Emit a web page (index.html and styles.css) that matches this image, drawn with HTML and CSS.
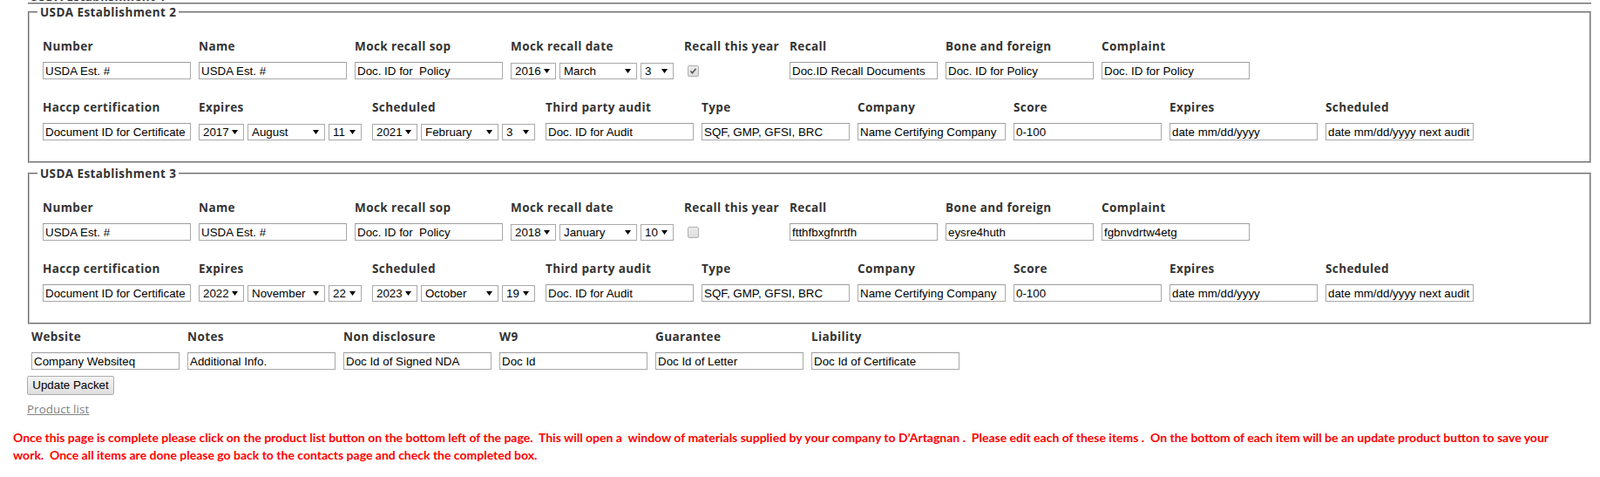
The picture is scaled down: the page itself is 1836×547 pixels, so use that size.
FILE: index.html
```html
<!DOCTYPE html>
<html>
<head>
<meta charset="utf-8">
<link rel="stylesheet" href="styles.css">
</head>
<body>
<div class="clip"><div class="clip-text">USDA Establishment 1</div></div>

<fieldset class="est">
  <legend>USDA Establishment 2</legend>
  <div class="row">
    <div class="cell"><label>Number</label><input type="text" value="USDA Est. #"></div>
    <div class="cell"><label>Name</label><input type="text" value="USDA Est. #"></div>
    <div class="cell"><label>Mock recall sop</label><input type="text" value="Doc. ID for  Policy"></div>
    <div class="cell date"><label>Mock recall date</label>
      <div class="sels"><select class="yr"><option>2016</option></select><select class="mo"><option>March</option></select><select class="dy"><option>3</option></select></div>
    </div>
    <div class="cell chk"><label>Recall this year</label><div class="ctl"><input type="checkbox" checked></div></div>
    <div class="cell"><label>Recall</label><input type="text" value="Doc.ID Recall Documents"></div>
    <div class="cell"><label>Bone and foreign</label><input type="text" value="Doc. ID for Policy"></div>
    <div class="cell"><label>Complaint</label><input type="text" value="Doc. ID for Policy"></div>
  </div>
  <div class="row">
    <div class="cell"><label>Haccp certification</label><input type="text" value="Document ID for Certificate"></div>
    <div class="cell date"><label>Expires</label>
      <div class="sels"><select class="yr"><option>2017</option></select><select class="mo"><option>August</option></select><select class="dy"><option>11</option></select></div>
    </div>
    <div class="cell date"><label>Scheduled</label>
      <div class="sels"><select class="yr"><option>2021</option></select><select class="mo"><option>February</option></select><select class="dy"><option>3</option></select></div>
    </div>
    <div class="cell"><label>Third party audit</label><input type="text" value="Doc. ID for Audit"></div>
    <div class="cell"><label>Type</label><input type="text" value="SQF, GMP, GFSI, BRC"></div>
    <div class="cell"><label>Company</label><input type="text" value="Name Certifying Company"></div>
    <div class="cell"><label>Score</label><input type="text" value="0-100"></div>
    <div class="cell"><label>Expires</label><input type="text" value="date mm/dd/yyyy"></div>
    <div class="cell"><label>Scheduled</label><input type="text" value="date mm/dd/yyyy next audit"></div>
  </div>
</fieldset>

<fieldset class="est">
  <legend>USDA Establishment 3</legend>
  <div class="row">
    <div class="cell"><label>Number</label><input type="text" value="USDA Est. #"></div>
    <div class="cell"><label>Name</label><input type="text" value="USDA Est. #"></div>
    <div class="cell"><label>Mock recall sop</label><input type="text" value="Doc. ID for  Policy"></div>
    <div class="cell date"><label>Mock recall date</label>
      <div class="sels"><select class="yr"><option>2018</option></select><select class="mo"><option>January</option></select><select class="dy"><option>10</option></select></div>
    </div>
    <div class="cell chk"><label>Recall this year</label><div class="ctl"><input type="checkbox"></div></div>
    <div class="cell"><label>Recall</label><input type="text" value="ftthfbxgfnrtfh"></div>
    <div class="cell"><label>Bone and foreign</label><input type="text" value="eysre4huth"></div>
    <div class="cell"><label>Complaint</label><input type="text" value="fgbnvdrtw4etg"></div>
  </div>
  <div class="row">
    <div class="cell"><label>Haccp certification</label><input type="text" value="Document ID for Certificate"></div>
    <div class="cell date"><label>Expires</label>
      <div class="sels"><select class="yr"><option>2022</option></select><select class="mo"><option>November</option></select><select class="dy"><option>22</option></select></div>
    </div>
    <div class="cell date"><label>Scheduled</label>
      <div class="sels"><select class="yr"><option>2023</option></select><select class="mo"><option>October</option></select><select class="dy"><option>19</option></select></div>
    </div>
    <div class="cell"><label>Third party audit</label><input type="text" value="Doc. ID for Audit"></div>
    <div class="cell"><label>Type</label><input type="text" value="SQF, GMP, GFSI, BRC"></div>
    <div class="cell"><label>Company</label><input type="text" value="Name Certifying Company"></div>
    <div class="cell"><label>Score</label><input type="text" value="0-100"></div>
    <div class="cell"><label>Expires</label><input type="text" value="date mm/dd/yyyy"></div>
    <div class="cell"><label>Scheduled</label><input type="text" value="date mm/dd/yyyy next audit"></div>
  </div>
</fieldset>

<div class="row bottom">
  <div class="cell"><label>Website</label><input type="text" value="Company Websiteq"></div>
  <div class="cell"><label>Notes</label><input type="text" value="Additional Info."></div>
  <div class="cell"><label>Non disclosure</label><input type="text" value="Doc Id of Signed NDA"></div>
  <div class="cell"><label>W9</label><input type="text" value="Doc Id"></div>
  <div class="cell"><label>Guarantee</label><input type="text" value="Doc Id of Letter"></div>
  <div class="cell"><label>Liability</label><input type="text" value="Doc Id of Certificate"></div>
</div>
<div class="actions"><button type="button" class="btn">Update Packet</button></div>
<div class="links"><a href="#" class="plink">Product list</a></div>
<p class="note">Once this page is complete please click on the product list button on the bottom left of the page.&nbsp; This will open a&nbsp; window of materials supplied by your company to D’Artagnan .&nbsp; Please edit each of these items .&nbsp; On the bottom of each item will be an update product button to save your<br>work.&nbsp; Once all items are done please go back to the contacts page and check the completed box.</p>
</body>
</html>
```

FILE: styles.css
```css
html, body {
  margin: 0;
  padding: 0;
  background: #fff;
}
body {
  font-family: "Open Sans", "Noto Sans", sans-serif;
  color: #333;
  width: 1836px;
  overflow: hidden;
}
.clip {
  margin: 0 10px 0 32px;
  height: 3px;
  overflow: hidden;
  border-bottom: 2px groove #c0c0c0;
}
.clip-text {
  margin-top: -12px;
  padding-left: 2px;
  font-weight: 700;
  font-size: 13.5px;
  letter-spacing: 0.4px;
  line-height: 16px;
}
.est {
  margin: 1px 10px 4px 32px;
  padding: 23px 0 24px 15px;
  border: 2px groove #c0c0c0;
  min-width: 0;
}
.est + .est {
  margin-top: 0;
}
.est legend {
  margin-left: -6px;
  padding: 0 3px;
  font-weight: 700;
  font-size: 13.5px;
  letter-spacing: 0.4px;
  line-height: 16px;
  color: #333;
}
.row {
  display: flex;
  gap: 9px;
  align-items: flex-start;
}
.row + .row {
  margin-top: 24px;
}
.cell {
  width: 170px;
  flex: none;
}
.cell.date {
  width: 190px;
}
.cell.chk {
  width: 112px;
}
.cell label {
  display: block;
  font-weight: 700;
  font-size: 13.5px;
  letter-spacing: 0.4px;
  line-height: 16px;
  margin-bottom: 10px;
  white-space: nowrap;
  color: #333;
}
input[type="text"] {
  box-sizing: border-box;
  display: block;
  width: 170px;
  height: 20px;
  margin: 0;
  padding: 1px 2px;
  border: 1px solid #a9a9a9;
  border-top-color: #9c9c9c;
  background: #fff;
  font-family: "Liberation Sans", Arial, sans-serif;
  font-size: 13.33px;
  color: #000;
  outline: none;
}
.sels {
  display: flex;
  gap: 4px;
  height: 20px;
  align-items: center;
}
select {
  -webkit-appearance: none;
  appearance: none;
  box-sizing: border-box;
  height: 19px;
  margin: 0;
  padding: 0 0 0 4px;
  border: 1px solid #a9a9a9;
  border-radius: 0;
  background: #fff url("data:image/svg+xml,%3Csvg xmlns='http://www.w3.org/2000/svg' width='7' height='5'%3E%3Cpolygon points='0,0 7,0 3.5,5' fill='%23000'/%3E%3C/svg%3E") no-repeat right 6px center;
  font-family: "Liberation Sans", Arial, sans-serif;
  font-size: 13.33px;
  line-height: 17px;
  color: #000;
}
select.yr { width: 52px; }
select.mo { width: 89px; }
select.dy { width: 38px; }
.ctl {
  height: 20px;
  display: flex;
  align-items: center;
}
input[type="checkbox"] {
  -webkit-appearance: none;
  appearance: none;
  box-sizing: border-box;
  width: 13px;
  height: 13px;
  margin: 0 0 0 4px;
  border: 1px solid #b1b1b1;
  border-radius: 2px;
  background: linear-gradient(#ebebeb, #dedede);
}
input[type="checkbox"]:checked {
  background: url("data:image/svg+xml,%3Csvg xmlns='http://www.w3.org/2000/svg' width='11' height='11'%3E%3Cpolyline points='2.5,5.5 4.5,7.8 8.5,2.8' fill='none' stroke='%23555' stroke-width='1.6'/%3E%3C/svg%3E") no-repeat center, linear-gradient(#ebebeb, #dedede);
}
.row.bottom {
  margin: 6px 0 0 36px;
}
.actions {
  margin: 5px 0 0 31px;
}
.btn {
  box-sizing: border-box;
  width: 100px;
  height: 22px;
  margin: 0;
  padding: 0;
  border: 1px solid #adadad;
  border-radius: 2px;
  background: linear-gradient(#f3f3f3, #dedede);
  font-family: "Liberation Sans", Arial, sans-serif;
  font-size: 13.33px;
  color: #000;
}
.links {
  margin: 7px 0 0 31px;
  line-height: 16px;
}
.plink {
  font-size: 13.3px;
  letter-spacing: 0.1px;
  color: #808080;
  text-decoration: underline;
}
.note {
  margin: 15px 0 0 15px;
  font-family: "Lato", "Open Sans", sans-serif;
  font-weight: 700;
  font-size: 14px;
  line-height: 20px;
  color: #ff0000;
  white-space: nowrap;
}
```
